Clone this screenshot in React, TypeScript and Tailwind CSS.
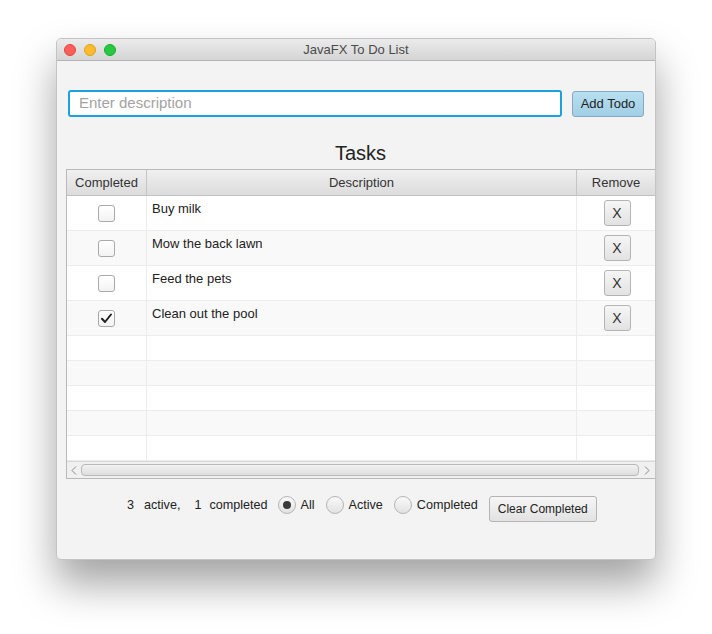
import React from 'react';

interface Todo {
  id: number;
  text: string;
  done: boolean;
}

const todos: Todo[] = [
  { id: 1, text: 'Buy milk', done: false },
  { id: 2, text: 'Mow the back lawn', done: false },
  { id: 3, text: 'Feed the pets', done: false },
  { id: 4, text: 'Clean out the pool', done: true },
];

const Checkbox: React.FC<{ checked: boolean }> = ({ checked }) => (
  <div className="w-[17px] h-[17px] rounded-[3px] border border-[#a9a9a9] bg-gradient-to-b from-white to-[#f3f3f3] flex items-center justify-center">
    {checked && (
      <svg width="13" height="13" viewBox="0 0 13 13">
        <path d="M2 6.8 L5 10 L11 2.5" fill="none" stroke="#222" strokeWidth="2" strokeLinecap="round" strokeLinejoin="round" />
      </svg>
    )}
  </div>
);

const Radio: React.FC<{ checked?: boolean }> = ({ checked }) => (
  <div className="w-[18px] h-[18px] rounded-full border border-[#b5b5b5] bg-gradient-to-b from-[#fafafa] to-[#e2e2e2] flex items-center justify-center">
    {checked && <div className="w-[8px] h-[8px] rounded-full bg-[#3a3a3a]" />}
  </div>
);

export default function App() {
  const emptyRows = [0, 1, 2, 3, 4];

  return (
    <div className="w-[712px] h-[634px] bg-white pt-[38px] pl-[56px] text-[#333]" style={{ fontFamily: '"Liberation Sans", Arial, sans-serif' }}>
      <div className="w-[600px] h-[522px] rounded-[5px] bg-[#f3f3f3] border border-[#c4c4c4] shadow-[0_24px_40px_rgba(0,0,0,0.36)] flex flex-col overflow-hidden">
        {/* Title bar */}
        <div className="h-[22px] shrink-0 bg-gradient-to-b from-[#ebebeb] to-[#d5d5d5] border-b border-[#b4b4b4] flex items-center relative">
          <div className="flex items-center gap-[8px] pl-[7px]">
            <div className="w-[12px] h-[12px] rounded-full bg-[#fc5f57] border border-[#e2463f]" />
            <div className="w-[12px] h-[12px] rounded-full bg-[#fdbc2e] border border-[#e1a116]" />
            <div className="w-[12px] h-[12px] rounded-full bg-[#28c840] border border-[#14ae2a]" />
          </div>
          <div className="absolute inset-0 flex items-center justify-center text-[13px] text-[#4a4a4a]">JavaFX To Do List</div>
        </div>

        {/* Input row */}
        <div className="flex items-center pl-[11px] pr-[11px] mt-[29px]">
          <div className="w-[494px] h-[27px] rounded-[3px] border-2 border-[#1ba1e2] bg-white flex items-center pl-[9px] text-[15px] text-[#a3a3a3]">
            Enter description
          </div>
          <div className="ml-[10px] w-[72px] h-[26px] rounded-[3px] border border-[#86a9bd] bg-gradient-to-b from-[#b7dff1] to-[#a2cfe5] flex items-center justify-center text-[13px] text-[#222]">
            Add Todo
          </div>
        </div>

        {/* Heading */}
        <div className="ml-[9px] text-center text-[20px] text-[#222] mt-[24px] leading-[24px]">Tasks</div>

        {/* Table */}
        <div className="ml-[9px] -mr-[1px] mt-[4px] border border-[#b9b9b9] bg-white flex flex-col">
          <div className="h-[26px] flex bg-gradient-to-b from-[#f0f0f0] to-[#dcdcdc] border-b border-[#c2c2c2] text-[13px] text-[#333]">
            <div className="w-[80px] border-r border-[#c5c5c5] flex items-center justify-center">Completed</div>
            <div className="w-[430px] border-r border-[#c5c5c5] flex items-center justify-center">Description</div>
            <div className="flex-1 flex items-center justify-center">Remove</div>
          </div>

          {todos.map((t, i) => (
            <div key={t.id} className={`h-[35px] flex border-b border-[#ececec] ${i % 2 === 1 ? 'bg-[#f9f9f9]' : 'bg-white'}`}>
              <div className="w-[80px] border-r border-[#ececec] flex items-center justify-center">
                <Checkbox checked={t.done} />
              </div>
              <div className="w-[430px] border-r border-[#ececec] pl-[5px] pt-[3px] text-[13px] text-[#222]">{t.text}</div>
              <div className="flex-1 flex items-center justify-center">
                <div className="ml-[2px] w-[27px] h-[26px] rounded-[3px] border border-[#b4b4b4] bg-gradient-to-b from-[#f6f6f6] to-[#e2e2e2] flex items-center justify-center text-[14px] text-[#333]">
                  X
                </div>
              </div>
            </div>
          ))}

          {emptyRows.map((r) => (
            <div key={r} className={`h-[25px] flex border-b border-[#ececec] ${r % 2 === 1 ? 'bg-[#f9f9f9]' : 'bg-white'}`}>
              <div className="w-[80px] border-r border-[#ececec]" />
              <div className="w-[430px] border-r border-[#ececec]" />
              <div className="flex-1" />
            </div>
          ))}

          {/* Horizontal scrollbar */}
          <div className="h-[17px] flex items-center bg-[#f0f0f0] border-t border-[#d8d8d8]">
            <div className="w-[14px] flex items-center justify-center">
              <svg width="6" height="9" viewBox="0 0 6 9">
                <path d="M5 0.5 L1 4.5 L5 8.5" fill="none" stroke="#8a8a8a" strokeWidth="1" />
              </svg>
            </div>
            <div className="flex-1 h-[12px] rounded-[4px] border border-[#b8b8b8] bg-gradient-to-b from-[#f2f2f2] to-[#dedede]" />
            <div className="w-[16px] flex items-center justify-center">
              <svg width="6" height="9" viewBox="0 0 6 9">
                <path d="M1 0.5 L5 4.5 L1 8.5" fill="none" stroke="#8a8a8a" strokeWidth="1" />
              </svg>
            </div>
          </div>
        </div>

        {/* Footer */}
        <div className="flex items-center mt-[9px] pl-[70px] text-[12.6px] text-[#222]">
          <span>3</span>
          <span className="ml-[10px]">active,</span>
          <span className="ml-[14px]">1</span>
          <span className="ml-[8px]">completed</span>
          <div className="ml-[10px] flex items-center gap-[5px]">
            <Radio checked />
            <span>All</span>
          </div>
          <div className="ml-[11px] flex items-center gap-[5px]">
            <Radio />
            <span>Active</span>
          </div>
          <div className="ml-[11px] flex items-center gap-[5px]">
            <Radio />
            <span>Completed</span>
          </div>
          <div className="ml-[11px] mt-[8px] h-[26px] px-[8px] rounded-[3px] border border-[#b4b4b4] bg-gradient-to-b from-[#f6f6f6] to-[#e2e2e2] flex items-center text-[12px] text-[#222]">
            Clear Completed
          </div>
        </div>
      </div>
    </div>
  );
}
